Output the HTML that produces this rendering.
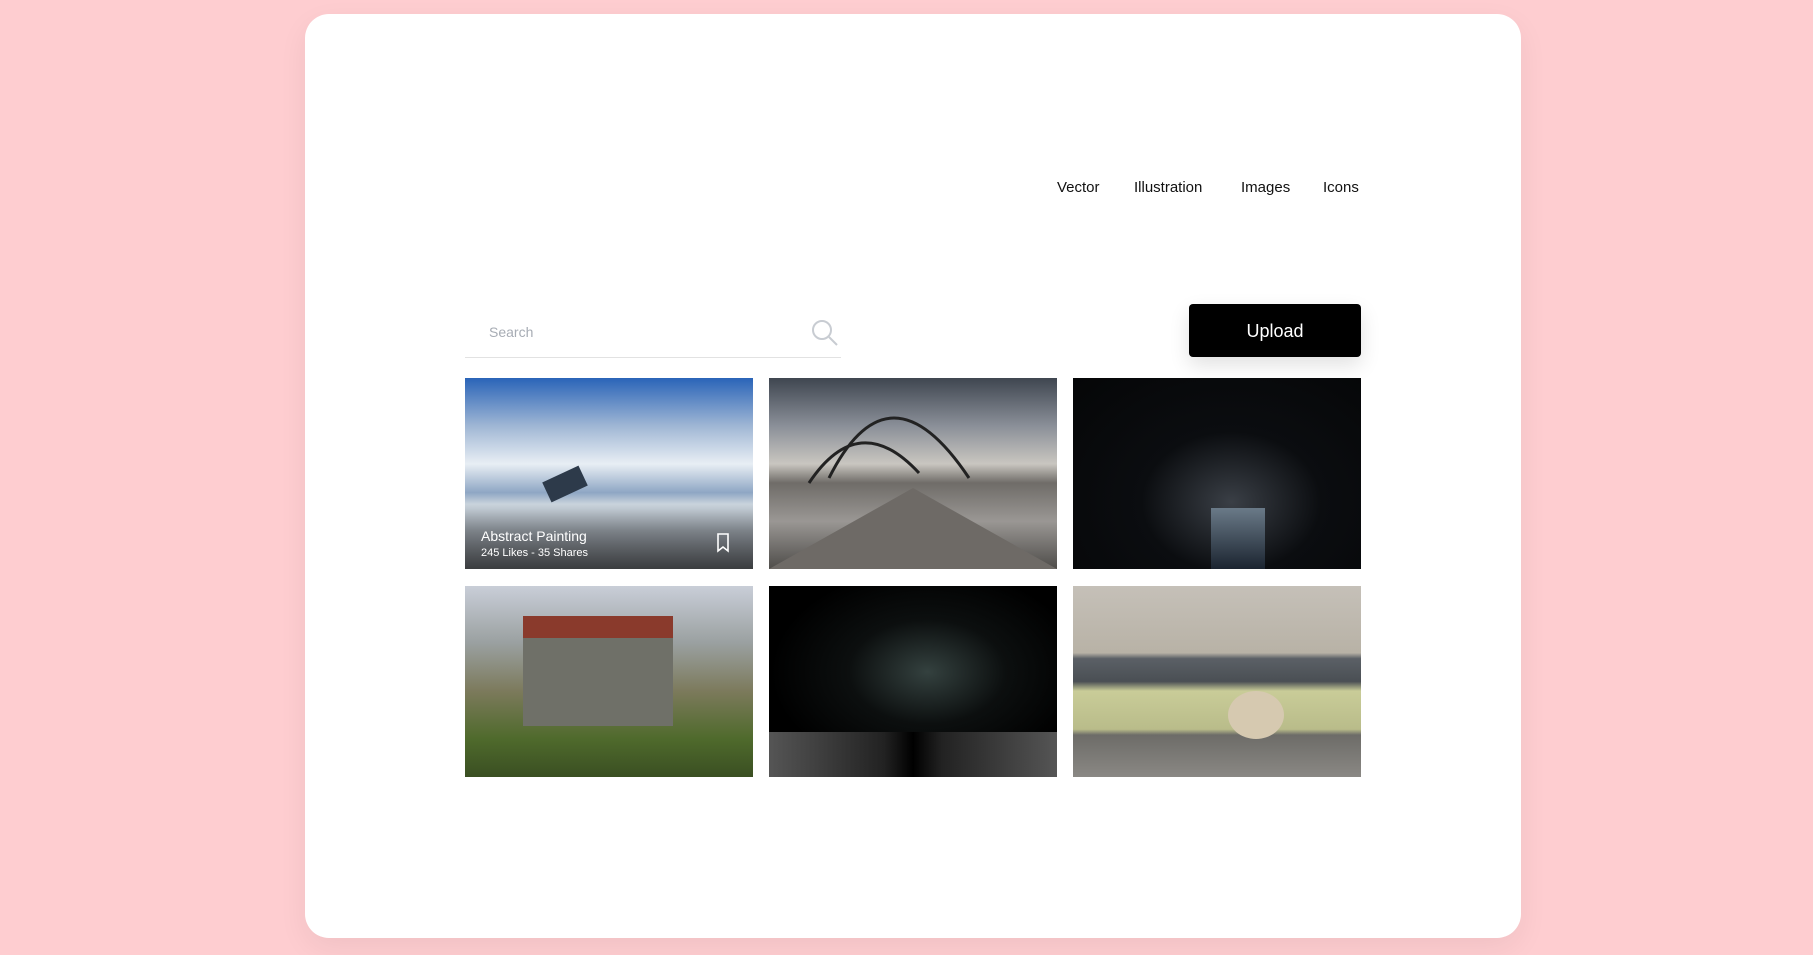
<!DOCTYPE html>
<html><head><style>
*{margin:0;padding:0;box-sizing:border-box}
body{width:1813px;height:955px;background:#fecdd0;font-family:"Liberation Sans",sans-serif;position:relative;overflow:hidden}
.card{position:absolute;left:305px;top:14px;width:1216px;height:924px;background:#fff;border-radius:24px;box-shadow:0 10px 30px rgba(0,0,0,.06)}
.nav{position:absolute;top:179px;font-size:15px;color:#111}
.search{position:absolute;left:465px;top:357px;width:376px;border-top:1px solid #e2e2e2}
.stext{position:absolute;left:489px;top:324px;font-size:14px;color:#a7acb4}
.btn{position:absolute;left:1189px;top:304px;width:172px;height:53px;background:#000;border-radius:4px;color:#fff;font-size:18px;text-align:center;line-height:55px;box-shadow:0 8px 20px rgba(0,0,0,.12)}
.img{position:absolute;width:288px;height:191px;overflow:hidden}
</style></head><body>
<div class="card"></div>
<div class="nav" style="left:1057px">Vector</div>
<div class="nav" style="left:1134px">Illustration</div>
<div class="nav" style="left:1241px">Images</div>
<div class="nav" style="left:1323px">Icons</div>
<div class="stext">Search</div>
<svg style="position:absolute;left:810px;top:318px" width="30" height="30" viewBox="0 0 30 30"><circle cx="12" cy="12" r="9" fill="none" stroke="#c8ccd2" stroke-width="2"/><path d="M19 19l8 8" stroke="#c8ccd2" stroke-width="2"/></svg>
<div class="search"></div>
<div class="btn">Upload</div>

<div class="img" style="left:465px;top:378px;background:linear-gradient(180deg,#2a64b8 0%,#9fb6d4 25%,#e8eef4 45%,#8ea6c4 60%,#c9d3dc 66%,#8e959c 80%,#5a5d61 100%)">
<div style="position:absolute;left:80px;top:95px;width:40px;height:22px;background:#2d3a4a;transform:rotate(-25deg)"></div>
<div style="position:absolute;left:0;bottom:0;width:100%;height:60px;background:linear-gradient(transparent,rgba(0,0,0,.35))"></div>
<div style="position:absolute;left:16px;top:150px;color:#fff;font-size:14px">Abstract Painting</div>
<div style="position:absolute;left:16px;top:169px;color:#fff;font-size:11px">245 Likes - 35 Shares</div>
<svg style="position:absolute;left:251px;top:155px" width="14" height="20" viewBox="0 0 14 20"><path d="M2 1h10v17l-5-4-5 4z" fill="none" stroke="#fff" stroke-width="1.6"/></svg>
</div>
<div class="img" style="left:769px;top:378px;background:linear-gradient(180deg,#3f4650 0%,#8a8f98 25%,#c9c6c0 45%,#6f6c68 55%,#9a9794 75%,#4f4d4a 100%)">
<svg width="288" height="191" style="position:absolute;left:0;top:0"><path d="M60 100 Q120 -20 200 100" fill="none" stroke="#222" stroke-width="3"/><path d="M40 105 Q90 30 150 95" fill="none" stroke="#222" stroke-width="3"/><path d="M0 191 L144 110 L288 191" fill="#6e6a66"/></svg>
</div>
<div class="img" style="left:1073px;top:378px;background:radial-gradient(ellipse at 55% 65%,#3a3f46 0%,#0b0d10 40%,#050607 100%)">
<div style="position:absolute;left:138px;top:130px;width:54px;height:61px;background:linear-gradient(#6a7a88,#1b2430)"></div>
</div>
<div class="img" style="left:465px;top:586px;background:linear-gradient(180deg,#c9ced8 0%,#9aa0a0 30%,#7c7a5c 55%,#4f6a2c 80%,#3a4f22 100%)">
<div style="position:absolute;left:58px;top:45px;width:150px;height:95px;background:#6f7068"></div>
<div style="position:absolute;left:58px;top:30px;width:150px;height:22px;background:#8a3a2c"></div>
</div>
<div class="img" style="left:769px;top:586px;background:radial-gradient(ellipse at 55% 45%,#34413f 0%,#0c0f0f 35%,#000 70%)">
<div style="position:absolute;left:0;bottom:0;width:100%;height:45px;background:linear-gradient(90deg,#555 0%,#222 40%,#000 50%,#222 60%,#555 100%)"></div>
</div>
<div class="img" style="left:1073px;top:586px;background:linear-gradient(180deg,#c5c0b8 0%,#b8b2a6 35%,#5b6066 38%,#4a4f54 50%,#c9cc98 55%,#b9bc8a 75%,#6d6c68 78%,#8a8884 100%)">
<div style="position:absolute;left:155px;top:105px;width:56px;height:48px;border-radius:50%;background:#d6c9b0"></div>
</div>
</body></html>
